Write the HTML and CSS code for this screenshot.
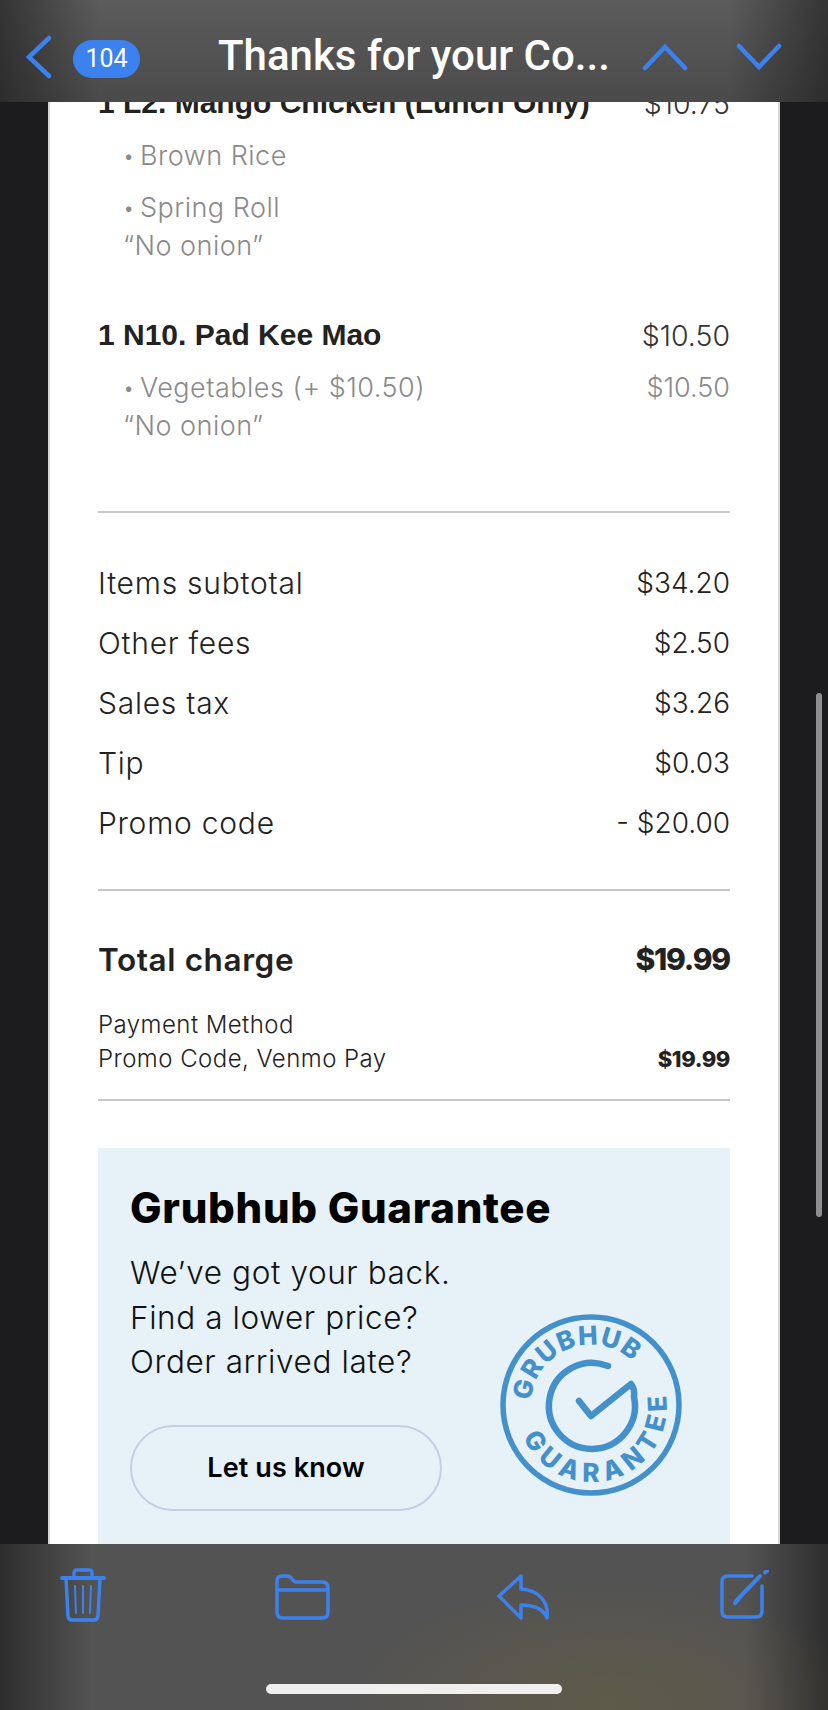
FILE: index.html
```html
<!DOCTYPE html>
<html lang="en">
<head>
<meta charset="utf-8">
<title>Thanks for your Co...</title>
<link rel="stylesheet" href="styles.css">
</head>
<body>
<div class="screen">
  <header class="topbar">
    <svg class="back" width="28" height="44" viewBox="0 0 28 44"><path d="M24 3 L4 22 L24 41" /></svg>
    <span class="badge">104</span>
    <h1 class="subject">Thanks for your Co...</h1>
    <div class="arrows">
      <svg class="arrow" width="46" height="28" viewBox="0 0 46 28"><path d="M3 25 L23 4 L43 25" /></svg>
      <svg class="arrow" width="46" height="28" viewBox="0 0 46 28"><path d="M3 3 L23 24 L43 3" /></svg>
    </div>
  </header>

  <main class="viewport">
    <div class="mail">
      <section class="item first">
        <div class="row item-head"><span class="item-name">1 L2. Mango Chicken (Lunch Only)</span><span class="price">$10.75</span></div>
        <div class="row opt gap-a"><span class="opt-label"><span class="dot">• </span>Brown Rice</span></div>
        <div class="row opt gap-b"><span class="opt-label"><span class="dot">• </span>Spring Roll</span></div>
        <div class="row opt"><span class="opt-label">“No onion”</span></div>
      </section>
      <section class="item second">
        <div class="row item-head"><span class="item-name">1 N10. Pad Kee Mao</span><span class="price">$10.50</span></div>
        <div class="row opt gap-a"><span class="opt-label"><span class="dot">• </span>Vegetables (+ $10.50)</span><span>$10.50</span></div>
        <div class="row opt"><span class="opt-label">“No onion”</span></div>
      </section>
      <hr class="rule rule-one">
      <section class="fees">
        <div class="row fee"><span class="fee-label">Items subtotal</span><span>$34.20</span></div>
        <div class="row fee"><span class="fee-label">Other fees</span><span>$2.50</span></div>
        <div class="row fee"><span class="fee-label">Sales tax</span><span>$3.26</span></div>
        <div class="row fee"><span class="fee-label">Tip</span><span>$0.03</span></div>
        <div class="row fee"><span class="fee-label">Promo code</span><span>- $20.00</span></div>
      </section>
      <hr class="rule rule-two">
      <div class="row total"><span class="total-label">Total charge</span><span class="total-amt">$19.99</span></div>
      <div class="row pay">
        <div class="pay-text">Payment Method<br>Promo Code, Venmo Pay</div>
        <span class="pay-amt">$19.99</span>
      </div>
      <hr class="rule rule-three">
      <section class="guarantee">
        <div class="g-left">
          <h2 class="g-title">Grubhub Guarantee</h2>
          <p class="g-copy">We’ve got your back.<br>Find a lower price?<br>Order arrived late?</p>
          <div class="g-btn">Let us know</div>
        </div>
        <svg class="seal" width="184" height="184" viewBox="-92 -92 184 184">
          <defs>
            <path id="sealTop" d="M-60 -4 A60 60 0 0 1 43 -42"/>
            <path id="sealBottom" d="M-68 32 A75 75 0 0 0 74 -14"/>
          </defs>
          <circle class="seal-ring" r="88"/>
          <path class="seal-g" d="M17 -39 A43 43 0 1 0 43 -8 Q44 -16 40 -21 L0 11 L-12 -4"/>
          <text class="seal-text"><textPath href="#sealTop" textLength="136" lengthAdjust="spacing">GRUBHUB</textPath></text>
          <text class="seal-text"><textPath href="#sealBottom" textLength="216" lengthAdjust="spacing">GUARANTEE</textPath></text>
        </svg>
      </section>
    </div>
    <div class="scrollbar"></div>
  </main>

  <footer class="toolbar">
    <div class="tools">
      <svg class="tool tool-trash" width="46" height="54" viewBox="0 0 46 54">
        <path d="M14 9 V5 Q14 2 17 2 H29 Q32 2 32 5 V9"/>
        <path d="M2 10 H44" class="heavy"/>
        <path d="M6 10 L8 48 Q8.500 52 12 52 H34 Q37.500 52 38 48 L40 10"/>
        <path d="M15 18 L16 45 M23 18 V45 M31 18 L30 45" class="thin"/>
      </svg>
      <svg class="tool tool-folder" width="55" height="46" viewBox="0 0 55 46">
        <path d="M2 14 V7 Q2 2 7 2 H12 Q15 2 17 5 L19 7 Q20 8 22 8 H47 Q53 8 53 14 V38 Q53 44 47 44 H8 Q2 44 2 38 Z M2 16 H53"/>
      </svg>
      <svg class="tool tool-reply" width="54" height="46" viewBox="0 0 54 46">
        <path d="M24 2 L2 22 L24 44 V31 C36 31 46 34 50 44 C52 28 42 16 24 15 Z"/>
      </svg>
      <svg class="tool tool-compose" width="50" height="50" viewBox="0 0 50 50">
        <path d="M32 6 H8 Q2 6 2 12 V41 Q2 47 8 47 H36 Q42 47 42 41 V16"/>
        <path d="M16 31 L40 6" class="heavy"/>
        <path d="M15 33 L18 30" class="heavy"/>
        <path d="M45 2.500 L47 1" class="heavy"/>
      </svg>
    </div>
    <div class="home-bar"></div>
  </footer>
</div>
</body>
</html>
```

FILE: styles.css
```css
* { box-sizing: border-box; }
html, body { margin: 0; padding: 0; }
body { background: #1c1c1e; font-family: "Inter", "Liberation Sans", sans-serif; }

.screen {
  width: 828px;
  height: 1710px;
  display: flex;
  flex-direction: column;
  overflow: hidden;
  background: #1c1c1e;
}

/* top bar */
.topbar {
  height: 102px;
  flex: none;
  display: flex;
  align-items: center;
  position: relative;
  padding: 4px 46px 0 25px;
  background:
    linear-gradient(90deg, rgba(20,20,20,.55) 0, rgba(20,20,20,0) 12%, rgba(20,20,20,0) 88%, rgba(20,20,20,.55) 100%),
    linear-gradient(180deg, #5c5c5c 0, #4a4a4a 100%);
}
.back { margin-top: 7px; }
.back path, .arrow path {
  fill: none;
  stroke: #3b82ee;
  stroke-width: 4.500;
  stroke-linecap: round;
  stroke-linejoin: miter;
}
.badge {
  margin-left: 20px;
  width: 67px;
  height: 38px;
  border-radius: 19px;
  background: #3b82ee;
  color: #fff;
  font: 400 25px/38px "Roboto", sans-serif;
  text-align: center;
  margin-top: 11px;
}
.subject {
  margin: 6px 0 0 78px;
  color: #fff;
  font: 500 42px/46px "Roboto", sans-serif;
  white-space: nowrap;
}
.arrows {
  margin-left: auto;
  display: flex;
  gap: 48px;
  margin-top: 8px;
}

/* mail */
.viewport {
  flex: 1;
  min-height: 0;
  overflow: hidden;
  display: flex;
  position: relative;
}
.mail {
  width: 732px;
  margin-left: 48px;
  height: 1600px;
  flex: none;
  background: #fff;
  border-left: 2px solid #d8d8d8;
  border-right: 2px solid #d8d8d8;
  padding: 0 48px;
  color: #222;
}
.row { display: flex; justify-content: space-between; align-items: center; }
.item.first { margin-top: -19px; }
.item.second { margin-top: 51px; }
.item-head { height: 40px; font-size: 30px; }
.item-name { font: 700 30px/40px "Liberation Sans", sans-serif; color: #222; }
.price { font-weight: 300; font-size: 28.500px; color: #333; }
.opt {
  height: 38px;
  font-weight: 300;
  font-size: 27px;
  color: #8a8a8a;
  padding-left: 25px;
}
.opt-label { letter-spacing: .5px; }
.dot { font-size: 20px; vertical-align: 2px; letter-spacing: 0; }
.gap-a { margin-top: 13px; }
.gap-b { margin-top: 14px; }
.rule { border: 0; height: 2px; background: #c8c8c8; margin: 0; }
.rule-one { margin-top: 67px; }
.fees { margin-top: 40px; }
.fee {
  height: 60px;
  font-weight: 300;
  font-size: 28px;
  color: #222;
}
.fee-label { font-size: 30px; letter-spacing: .75px; }
.rule-two { margin-top: 36px; }
.total {
  margin-top: 44px;
  height: 48px;
  font-weight: 600;
  font-size: 31.500px;
  color: #222;
}
.total-label { letter-spacing: .6px; }
.total-amt { font-weight: 800; font-size: 30px; letter-spacing: -1.200px; }
.pay {
  margin-top: 25px;
  align-items: flex-end;
  font-size: 24px;
}
.pay-text { font-weight: 300; line-height: 34px; color: #222; letter-spacing: .45px; }
.pay-amt { font-weight: 800; font-size: 22px; line-height: 34px; letter-spacing: -.4px; }
.rule-three { margin-top: 23px; }

.guarantee {
  margin-top: 47px;
  height: 420px;
  background: #e6f1f8;
  padding: 0 47px 0 32px;
  display: flex;
  justify-content: space-between;
  align-items: flex-start;
  color: #0b0b0b;
}
.g-left { width: 360px; flex: none; }
.g-title {
  margin: 34px 0 0;
  font-weight: 800;
  font-size: 42px;
  letter-spacing: .7px;
  line-height: 52px;
  white-space: nowrap;
  color: #000;
}
.g-copy {
  margin: 17px 0 0;
  font-weight: 300;
  font-size: 31.500px;
  letter-spacing: .6px;
  line-height: 44.500px;
  color: #111;
}
.g-btn {
  margin-top: 40px;
  width: 312px;
  height: 86px;
  border: 2px solid #c3d0e4;
  border-radius: 43px;
  display: flex;
  align-items: center;
  justify-content: center;
  font-weight: 600;
  font-size: 27px;
  letter-spacing: .1px;
  color: #000;
}
.seal { margin-top: 165px; flex: none; }
.seal-ring { fill: none; stroke: #4390ca; stroke-width: 5.500; }
.seal-g {
  fill: none;
  stroke: #4390ca;
  stroke-width: 6.500;
  stroke-linecap: round;
  stroke-linejoin: round;
}
.seal-text {
  fill: #4390ca;
  font-family: "Inter", sans-serif;
  font-weight: 800;
  font-size: 26px;
}

.scrollbar {
  position: absolute;
  left: 816px;
  top: 591px;
  width: 6px;
  height: 524px;
  border-radius: 3px;
  background: #8e8e8e;
}

/* toolbar */
.toolbar {
  height: 166px;
  flex: none;
  display: flex;
  flex-direction: column;
  background:
    radial-gradient(260px 120px at 610px 160px, rgba(110,100,60,.45), rgba(110,100,60,0)),
    linear-gradient(90deg, rgba(20,20,20,.6) 0, rgba(20,20,20,0) 11%, rgba(20,20,20,0) 90%, rgba(20,20,20,.6) 100%),
    #535353;
}
.tools {
  height: 140px;
  flex: none;
  display: flex;
  justify-content: space-between;
  align-items: flex-start;
  padding: 0 58px 0 60px;
}
.tool path { fill: none; stroke: #3b82ee; stroke-width: 3.500; stroke-linecap: round; stroke-linejoin: round; }
.tool .heavy { stroke-width: 4; }
.tool .thin { stroke-width: 2; }
.tool-trash { margin-top: 24px; }
.tool-folder { margin-top: 30px; }
.tool-reply { margin-top: 30px; margin-left: -2px; }
.tool-compose { margin-top: 26px; }
.home-bar {
  width: 296px;
  height: 10px;
  margin: 0 auto;
  border-radius: 5px;
  background: #efefef;
}
```
